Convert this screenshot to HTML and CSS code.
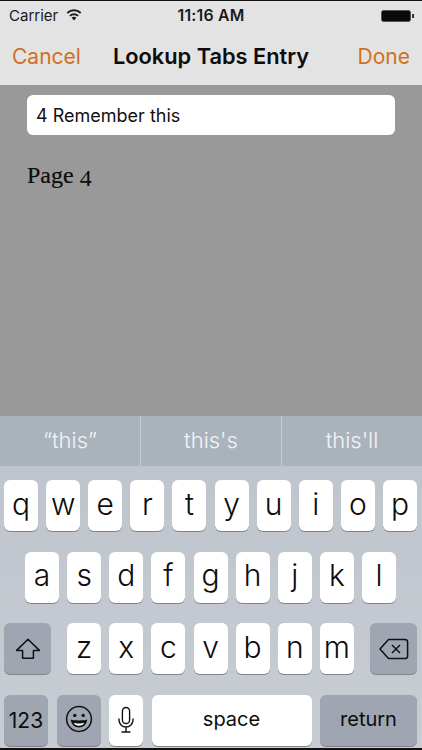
FILE: index.html
```html
<!DOCTYPE html>
<html lang="en">
<head>
<meta charset="utf-8">
<title>Lookup Tabs Entry</title>
<link rel="stylesheet" href="styles.css">
</head>
<body>
<div class="screen">
  <header class="chrome">
    <div class="status">
      <div class="status-left">
        <span>Carrier</span>
        <svg class="wifi" viewBox="0 0 16 12" width="16" height="12"><path d="M8 11.6 5.6 8.8a3.6 3.6 0 0 1 4.8 0Z" fill="#1a1a1a"/><path d="M3.9 6.9a6 6 0 0 1 8.2 0M1.3 4a9.6 9.6 0 0 1 13.4 0" fill="none" stroke="#1a1a1a" stroke-width="1.9"/></svg>
      </div>
      <div class="status-time">11:16 AM</div>
      <div class="status-right">
        <span class="battery"></span><span class="battery-tip"></span>
      </div>
    </div>
    <nav class="nav">
      <span class="nav-btn">Cancel</span>
      <span class="nav-title">Lookup Tabs Entry</span>
      <span class="nav-btn nav-done">Done</span>
    </nav>
  </header>
  <main class="content">
    <div class="field">4 Remember this</div>
    <p class="page">Page <span class="oldstyle">4</span></p>
  </main>
  <section class="suggest">
    <div class="sug">“this”</div>
    <div class="sug sug-mid">this's</div>
    <div class="sug">this'll</div>
  </section>
  <section class="kbd">
    <div class="row">
      <span class="key">q</span><span class="key">w</span><span class="key">e</span><span class="key">r</span><span class="key">t</span><span class="key">y</span><span class="key">u</span><span class="key">i</span><span class="key">o</span><span class="key">p</span>
    </div>
    <div class="row row-2">
      <span class="key">a</span><span class="key">s</span><span class="key">d</span><span class="key">f</span><span class="key">g</span><span class="key">h</span><span class="key">j</span><span class="key">k</span><span class="key">l</span>
    </div>
    <div class="row">
      <span class="key dark wide shift">
        <svg viewBox="0 0 28 24" width="28" height="24"><path d="M14 2.2 2.6 13.4H8.6V21.2H19.4V13.4H25.4Z" fill="none" stroke="#111" stroke-width="1.5" stroke-linejoin="round"/></svg>
      </span>
      <span class="key">z</span><span class="key">x</span><span class="key">c</span><span class="key">v</span><span class="key">b</span><span class="key">n</span><span class="key">m</span>
      <span class="key dark wide del">
        <svg viewBox="0 0 32 24" width="32" height="24"><path d="M10.5 2.5H27a2.6 2.6 0 0 1 2.6 2.6V19a2.6 2.6 0 0 1-2.6 2.6H10.5L2 12Z" fill="none" stroke="#111" stroke-width="1.5" stroke-linejoin="round"/><path d="M14 8l8 8M22 8l-8 8" fill="none" stroke="#111" stroke-width="1.5"/></svg>
      </span>
    </div>
    <div class="row row-4">
      <span class="key dark k123">123</span>
      <span class="key dark kemoji">
        <svg viewBox="0 0 28 28" width="28" height="28"><circle cx="14" cy="14" r="12.4" fill="none" stroke="#111" stroke-width="1.5"/><circle cx="9.8" cy="10.4" r="1.7" fill="#111"/><circle cx="18.2" cy="10.4" r="1.7" fill="#111"/><path d="M5.8 14.6c3 1.2 13.4 1.2 16.4 0-.4 5-4 8-8.2 8s-7.800-3-8.200-8Z" fill="#111"/><path d="M8.500 17.800c2.800 1 8.200 1 11 0-1 2-3.200 3-5.500 3s-4.500-1-5.500-3Z" fill="#fff"/></svg>
      </span>
      <span class="key kmic">
        <svg viewBox="0 0 18 28" width="18" height="28"><rect x="5.400" y="1.500" width="7.200" height="16" rx="3.600" fill="none" stroke="#111" stroke-width="1.400"/><path d="M2 12.500v1.500a7 7 0 0 0 14 0v-1.500M9 21v4.500M4.500 26h9" fill="none" stroke="#111" stroke-width="1.400"/></svg>
      </span>
      <span class="key kspace">space</span>
      <span class="key dark kreturn">return</span>
    </div>
  </section>
</div>
</body>
</html>
```
FILE: styles.css
```css
* { box-sizing: border-box; }
html, body { margin: 0; padding: 0; }
body { background: #000; font-family: Inter, "Liberation Sans", sans-serif; }
.screen {
  width: 422px;
  height: 750px;
  overflow: hidden;
  display: flex;
  flex-direction: column;
  background: #999;
  border-top: 1px solid #111;
  border-bottom: 2px solid #111;
}
.chrome { background: #e3e3e3; height: 84px; }
.status {
  height: 28px;
  display: flex;
  align-items: center;
  justify-content: space-between;
  padding: 1px 8px 0 9px;
  font-size: 15px;
  color: #1a1a1a;
}
.status-left { display: flex; align-items: center; gap: 8px; width: 100px; }
.wifi { margin-top: -2px; }
.status-time { font-weight: 600; font-size: 15.800px; letter-spacing: 0.2px; margin-left: -1px; }
.status-right { display: flex; align-items: center; justify-content: flex-end; width: 100px; }
.battery { width: 30px; height: 12px; background: #0a0a0a; border-radius: 2.500px; border: 1px solid #555; }
.battery-tip { width: 2px; height: 4px; background: #333; margin-left: 1px; }
.nav {
  height: 56px;
  display: flex;
  align-items: center;
  padding: 0 12px 2px;
}
.nav-btn { flex: 1; font-size: 21px; color: #d2701f; }
.nav-done { text-align: right; }
.nav-title { font-size: 21.800px; font-weight: 600; color: #0c0c0c; }
.content { flex: 1; padding: 10px 27px 0; background: #999; }
.field {
  height: 40px;
  background: #fff;
  border-radius: 6px;
  display: flex;
  align-items: center;
  padding-left: 9px;
  font-size: 18px;
  color: #111;
}
.page {
  margin: 26px 0 0;
  font-family: "Liberation Serif", serif;
  font-size: 24px;
  line-height: 28px;
  color: #0c0c0c;
  -webkit-text-stroke: 0.2px #0c0c0c;
}
.oldstyle { font-size: 24px; position: relative; top: 3px; -webkit-text-stroke: 0; }
.suggest { height: 50px; display: flex; background: #aab3bb; }
.sug {
  flex: 1;
  display: flex;
  align-items: center;
  justify-content: center;
  font-size: 22px;
  font-weight: 300;
  color: #f2f4f5;
  padding-bottom: 3px;
}
.sug-mid { border-left: 1px solid #c6ccd2; border-right: 1px solid #c6ccd2; }
.kbd {
  height: 282px;
  background: linear-gradient(#bfc5cd, #c8ccd3);
  padding: 14px 5px 0 4px;
  display: flex;
  flex-direction: column;
  gap: 20.500px;
}
.row { display: flex; justify-content: space-between; height: 51px; flex: none; }
.row-2 { padding: 0 21px; }
.key {
  width: 34px;
  height: 51px;
  background: #fff;
  border-radius: 6px;
  box-shadow: 0 1px 0 #80838a;
  display: flex;
  align-items: center;
  justify-content: center;
  font-size: 30px;
  font-weight: 300;
  color: #0c0c0c;
  padding-bottom: 4px;
}
.dark { background: #a0a6b1; }
.wide { width: 47px; padding-bottom: 0; }
.shift { margin-right: 8px; }
.del { margin-left: 8px; }
.row-4 { gap: 8.500px; justify-content: flex-start; }
.k123 { width: 44px; font-size: 21px; font-weight: 400; padding: 0; }
.kemoji { width: 44px; padding: 0 0 2px; }
.kmic { width: 34px; padding: 0; }
.kspace { width: 160px; font-size: 20px; font-weight: 400; padding: 0 0 2px; }
.kreturn { width: 97px; font-size: 20px; font-weight: 400; padding: 0 0 2px; flex: 1; }
```
